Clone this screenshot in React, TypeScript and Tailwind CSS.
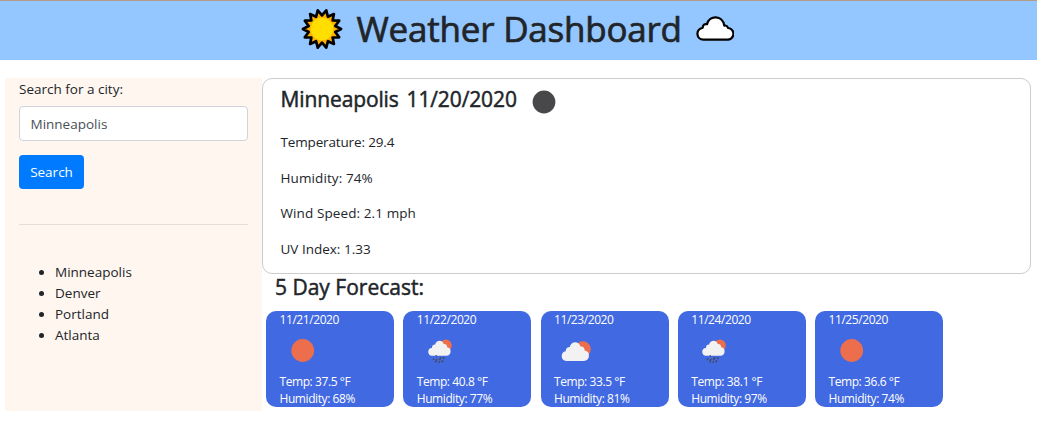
type IconKind = "clear" | "rain" | "cloudy";

interface Day {
  date: string;
  icon: IconKind;
  temp: string;
  humidity: string;
}

const cities = ["Minneapolis", "Denver", "Portland", "Atlanta"];

const days: Day[] = [
  { date: "11/21/2020", icon: "clear", temp: "37.5", humidity: "68" },
  { date: "11/22/2020", icon: "rain", temp: "40.8", humidity: "77" },
  { date: "11/23/2020", icon: "cloudy", temp: "33.5", humidity: "81" },
  { date: "11/24/2020", icon: "rain", temp: "38.1", humidity: "97" },
  { date: "11/25/2020", icon: "clear", temp: "36.6", humidity: "74" },
];

const sunPoints = Array.from({ length: 28 }, (_, i) => {
  const angle = (i * Math.PI) / 14;
  const r = i % 2 === 0 ? 19.1 : 13.6;
  return `${(21 + r * Math.cos(angle)).toFixed(2)},${(21 + r * Math.sin(angle)).toFixed(2)}`;
}).join(" ");

function SunLogo() {
  return (
    <svg width="42" height="42" viewBox="0 0 42 42" className="shrink-0">
      <polygon points={sunPoints} fill="#ffb100" stroke="#000" strokeWidth="2.7" strokeLinejoin="round" />
      <circle cx="21" cy="21" r="11.2" fill="#ffde00" />
    </svg>
  );
}

function CloudLogo() {
  return (
    <svg width="38" height="26" viewBox="0 0 38 26" className="shrink-0">
      <path
        d="M7.5 23.6H31A5.7 5.7 0 0 0 32.2 12Q30.6 8.8 28.3 9.7C26.8-.9 13.2-1.4 11 8.2Q7.2 7.4 6.7 11.7C-.9 13.4.1 23.6 7.5 23.6Z"
        fill="#fff"
        stroke="#000"
        strokeWidth="2.2"
        strokeLinejoin="round"
      />
    </svg>
  );
}

function WeatherIcon({ kind }: { kind: IconKind }) {
  if (kind === "clear") {
    return (
      <svg width="46" height="46" viewBox="0 0 46 46">
        <circle cx="22.7" cy="22.5" r="11.4" fill="#ec6e4c" />
      </svg>
    );
  }
  if (kind === "cloudy") {
    return (
      <svg width="46" height="46" viewBox="0 0 46 46">
        <circle cx="28.9" cy="21.2" r="7.9" fill="#ec6e4c" />
        <path
          d="M12.2 32.9a4.9 4.9 0 0 1-.5-9.7q.3-4.2 4.1-4.2c1-6.3 9.3-6.4 10.7-.5 2.5-.4 4 1.3 4.2 3.9a5.3 5.3 0 0 1-.9 10.5Z"
          fill="#f2f2f2"
        />
      </svg>
    );
  }
  return (
    <svg width="46" height="46" viewBox="0 0 46 46">
      <circle cx="28.8" cy="17.6" r="6" fill="#ec6e4c" />
      <path
        d="M15.4 27.7a3.9 3.9 0 0 1-.5-7.8q.2-3.5 3.3-3.4c1-4.8 7.4-4.9 8.5-.4 2.1-.3 3.4 1 3.5 3.1a4.3 4.3 0 0 1-.7 8.5Z"
        fill="#f2f2f2"
      />
      <path
        d="M16.9 30.6l-.6 1.5M19.4 27.2l-.4 1.2M20.1 31l-1.5 3.4M23.8 29.3l-1.3 2.7M27.1 29.2l-.7 1.8M22.7 33.2l-.7 1.6M25.8 32.4l-.9 1.9"
        stroke="#48484a"
        strokeWidth="1.4"
      />
    </svg>
  );
}

function ForecastCard({ day }: { day: Day }) {
  return (
    <article className="h-24 w-32 rounded-[10px] bg-[#4169e1] pl-[13.5px] text-[12px] leading-[17px] tracking-[-0.42px] text-white">
      <p>{day.date}</p>
      <div className="h-[45px]">
        <WeatherIcon kind={day.icon} />
      </div>
      <p>Temp: {day.temp} °F</p>
      <p>Humidity: {day.humidity}%</p>
    </article>
  );
}

export default function App() {
  return (
    <div className="h-[422px] overflow-hidden bg-white font-['Open_Sans','Noto_Sans',sans-serif] text-[13.5px] leading-[21px] text-[#212529]">
      <header className="flex h-[60px] items-center justify-center border-t border-[#b39b85] bg-[#94c6ff] pr-[3px] pb-[3px]">
        <SunLogo />
        <h1 className="ml-[14px] mr-[13px] w-[326px] whitespace-nowrap text-[35px] leading-[38px] tracking-[-0.22px] [-webkit-text-stroke:0.7px_#212529]">
          Weather Dashboard
        </h1>
        <CloudLogo />
      </header>
      <main className="mt-[18px] flex pl-[5px]">
        <aside className="h-[333px] w-[257px] bg-[#fff6ef] px-[14px]">
          <label htmlFor="city" className="block h-[28px] leading-[22px]">
            Search for a city:
          </label>
          <input
            id="city"
            defaultValue="Minneapolis"
            className="block h-[35px] w-full rounded-[4px] border border-[#ced4da] bg-white px-[10.5px] text-[#495057]"
          />
          <button className="mt-[14px] block h-[34px] w-[65px] rounded-[4px] bg-[#007bff] text-white">Search</button>
          <hr className="mt-[35px] border-t border-[#e6ddd7]" />
          <ul className="mt-[37px] list-disc pl-9">
            {cities.map((city) => (
              <li key={city}>{city}</li>
            ))}
          </ul>
        </aside>
        <div>
          <section className="h-[196px] w-[769px] rounded-[10px] border border-[#cccccc] pl-[17.5px]">
            <div className="flex h-[42px] items-center">
              <h2 className="w-[239px] whitespace-nowrap pb-[2px] text-[21px] leading-[23px] tracking-[-0.12px] [word-spacing:2.5px] [-webkit-text-stroke:0.5px_#212529]">
                Minneapolis 11/20/2020
              </h2>
              <svg width="46" height="46" viewBox="0 0 46 46" className="mt-[4px]">
                <circle cx="24" cy="23" r="11.4" fill="#48484a" />
              </svg>
            </div>
            <div className="mt-[11px] flex flex-col gap-[14.6px]">
              <p className="tracking-[-0.15px]">Temperature: 29.4</p>
              <p className="tracking-[0.1px]">Humidity: 74%</p>
              <p className="tracking-[0.1px]">Wind Speed: 2.1 mph</p>
              <p>UV Index: 1.33</p>
            </div>
          </section>
          <h2 className="h-[37px] pl-[13px] text-[21px] leading-[27px] [-webkit-text-stroke:0.5px_#212529]">
            5 Day Forecast:
          </h2>
          <section className="flex gap-[9.25px] pl-1">
            {days.map((day) => (
              <ForecastCard key={day.date} day={day} />
            ))}
          </section>
        </div>
      </main>
    </div>
  );
}
